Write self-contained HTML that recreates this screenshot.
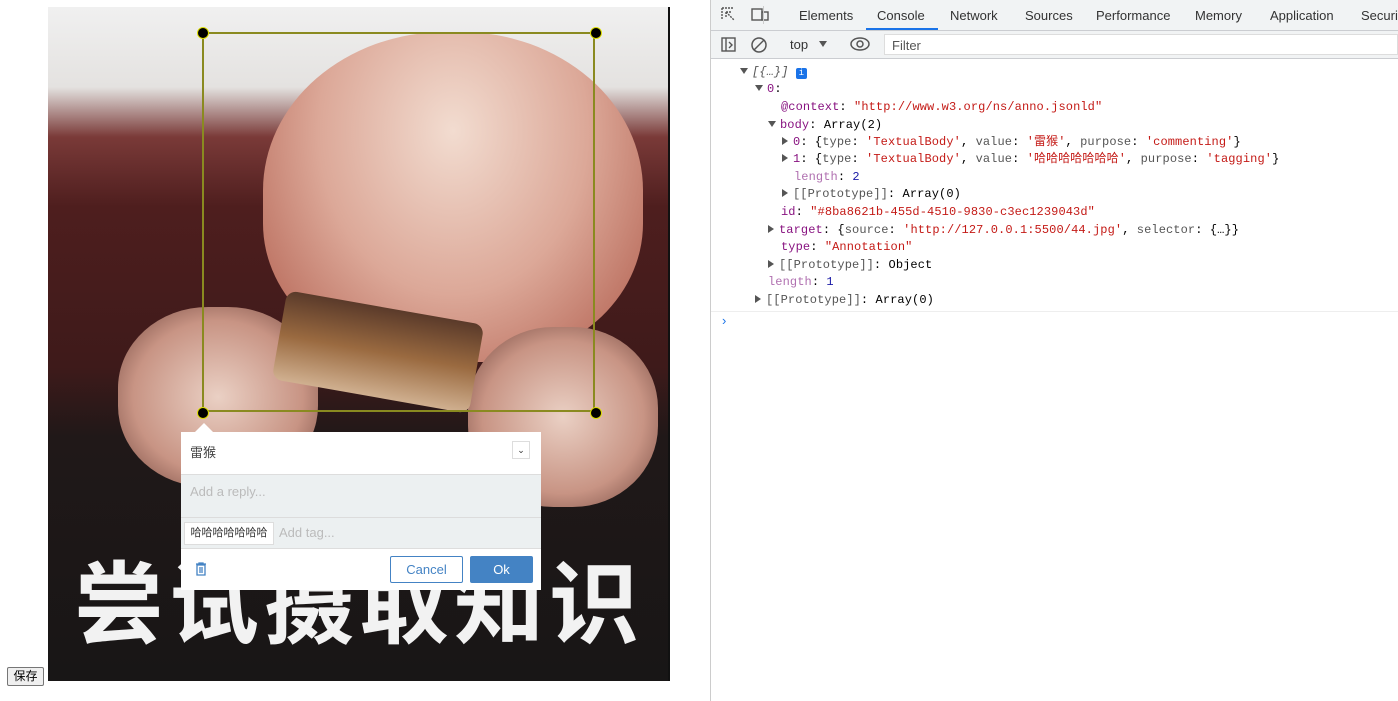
<!DOCTYPE html>
<html><head><meta charset="utf-8"><style>
body{margin:0;width:1398px;height:701px;background:#fff;position:relative;overflow:hidden;font-family:"Liberation Sans","Noto Sans CJK SC",sans-serif}
.abs{position:absolute}
#img{left:48px;top:7px;width:622px;height:674px;overflow:hidden;background:#e8e8e8}
.mono{font-family:"Liberation Mono","Noto Sans CJK SC",monospace;font-size:12px;white-space:pre;letter-spacing:0.1px}
.l{position:absolute;height:17px;line-height:17px}
.k{color:#881280}.s{color:#c41a16}.n{color:#1a1aa6}.g{color:#999}.t{color:#555}
.tri{display:inline-block;width:0;height:0;border-left:4px solid transparent;border-right:4px solid transparent;border-top:6px solid #555;margin-right:4px;vertical-align:1px}
.trr{display:inline-block;width:0;height:0;border-top:4px solid transparent;border-bottom:4px solid transparent;border-left:6px solid #555;margin-right:5px;vertical-align:0}
.tab{position:absolute;top:8px;font-size:13px;color:#333}
.h{position:absolute;width:10px;height:10px;border-radius:50%;background:#000;border:1px solid #dd0}
</style></head><body>
<div id="img" class="abs">
 <div class="abs" style="left:0;top:0;width:622px;height:674px;background:linear-gradient(#f0f0f0 0,#e4e2e0 80px,#7a3a38 130px,#4e1e1e 200px,#3e1a1a 360px,#201818 430px,#181616 674px)"></div>
 <div class="abs" style="left:215px;top:25px;width:380px;height:330px;border-radius:48% 48% 42% 42%;background:radial-gradient(ellipse at 50% 30%,#f2dcd0,#dca898 50%,#c07868 80%,#8a4a40)"></div>
 <div class="abs" style="left:70px;top:300px;width:200px;height:180px;border-radius:45%;background:radial-gradient(#ead0c4,#c89484 60%,#6a4038)"></div>
 <div class="abs" style="left:420px;top:320px;width:190px;height:180px;border-radius:45%;background:radial-gradient(#ead0c4,#c89484 60%,#6a4038)"></div>
 <div class="abs" style="left:230px;top:300px;width:200px;height:90px;transform:rotate(10deg);background:linear-gradient(#5a3a2a,#9a6a40,#d0b090);border-radius:10px"></div>
 <div class="abs" style="left:26px;top:530px;font-size:90px;font-weight:bold;color:#f2f2f2;letter-spacing:5px;white-space:nowrap;font-family:'Noto Sans CJK SC',sans-serif;line-height:120px">尝试摄取知识</div>
 <div class="abs" style="left:620px;top:0;width:2px;height:674px;background:#111"></div>
</div>
<div class="abs" style="left:202px;top:32px;width:393px;height:380px;border:2px solid #8a8a20;box-sizing:border-box"></div>
<div class="h" style="left:197px;top:27px"></div><div class="h" style="left:590px;top:27px"></div>
<div class="h" style="left:197px;top:407px"></div><div class="h" style="left:590px;top:407px"></div>
<div class="abs" style="left:195px;top:423px;width:0;height:0;border-left:9px solid transparent;border-right:9px solid transparent;border-bottom:9px solid #fff"></div>
<div class="abs" style="left:181px;top:432px;width:360px;height:158px;background:#fff">
 <div class="abs" style="left:9px;top:10px;font-size:13px;color:#444">雷猴</div>
 <div class="abs" style="left:331px;top:9px;width:18px;height:18px;border:1px solid #ddd;box-sizing:border-box;font-size:9px;text-align:center;line-height:16px;color:#333">⌄</div>
 <div class="abs" style="left:0;top:42px;width:360px;height:74px;background:#ecf0f1;border-top:1px solid #ddd"></div>
 <div class="abs" style="left:0;top:85px;width:360px;height:1px;background:#dcdcdc"></div>
 <div class="abs" style="left:9px;top:52px;font-size:13px;color:#bbb">Add a reply...</div>
 <div class="abs" style="left:3px;top:90px;width:90px;height:23px;background:#fff;border:1px solid #ddd;box-sizing:border-box;font-size:11px;line-height:21px;text-align:center;color:#333">哈哈哈哈哈哈哈</div>
 <div class="abs" style="left:98px;top:93px;font-size:13px;color:#bbb">Add tag...</div>
 <div class="abs" style="left:0;top:116px;width:360px;height:1px;background:#ddd"></div>
 <svg class="abs" style="left:14px;top:130px" width="12" height="14" viewBox="0 0 12 14"><path d="M1 2h10M4 2V1h4v1M2 3h8v10H2zM5 5v6M7 5v6" fill="none" stroke="#4483c4" stroke-width="1.3"/></svg>
 <div class="abs" style="left:209px;top:124px;width:73px;height:27px;border:1px solid #4483c4;box-sizing:border-box;color:#4483c4;font-size:13px;text-align:center;line-height:25px;border-radius:2px">Cancel</div>
 <div class="abs" style="left:289px;top:124px;width:63px;height:27px;background:#4483c4;color:#fff;font-size:13px;text-align:center;line-height:27px;border-radius:2px">Ok</div>
</div>
<div class="abs" style="left:7px;top:667px;width:37px;height:19px;border:1px solid #767676;background:#efefef;box-sizing:border-box;font-size:12px;text-align:center;line-height:17px;border-radius:2px">保存</div>

<div class="abs" style="left:710px;top:0;width:1px;height:701px;background:#ccc"></div>
<div class="abs" style="left:711px;top:0;width:687px;height:30px;background:#f1f3f4;border-bottom:1px solid #cbcdd1"></div>
<svg class="abs" style="left:720px;top:6px" width="18" height="18"><path d="M2 2h12M2 2v12M6 6l8 8M6 6h5M6 6v5" fill="none" stroke="#555" stroke-width="1.4" stroke-dasharray="2 1"/></svg>
<svg class="abs" style="left:750px;top:6px" width="20" height="18"><rect x="2" y="3" width="10" height="11" fill="none" stroke="#555" stroke-width="1.4"/><rect x="12" y="6" width="6" height="8" fill="none" stroke="#555" stroke-width="1.4"/></svg>
<div class="abs" style="left:763px;top:6px;width:1px;height:18px;background:#ccc"></div>
<div class="tab" style="left:799px">Elements</div>
<div class="tab" style="left:877px">Console</div>
<div class="abs" style="left:866px;top:28px;width:72px;height:2px;background:#1a73e8"></div>
<div class="tab" style="left:950px">Network</div>
<div class="tab" style="left:1025px">Sources</div>
<div class="tab" style="left:1096px">Performance</div>
<div class="tab" style="left:1195px">Memory</div>
<div class="tab" style="left:1270px">Application</div>
<div class="tab" style="left:1361px">Securi</div>
<div class="abs" style="left:711px;top:31px;width:687px;height:27px;background:#f1f3f4;border-bottom:1px solid #cbcdd1"></div>
<svg class="abs" style="left:720px;top:36px" width="18" height="18"><rect x="2" y="2" width="13" height="13" fill="none" stroke="#555" stroke-width="1.4"/><path d="M6 2v13M9 6l3 3-3 3" fill="none" stroke="#555" stroke-width="1.4"/></svg>
<svg class="abs" style="left:750px;top:36px" width="18" height="18"><circle cx="9" cy="9" r="7" fill="none" stroke="#555" stroke-width="1.5"/><path d="M4 14L14 4" stroke="#555" stroke-width="1.5"/></svg>
<div class="abs" style="left:790px;top:37px;font-size:13px;color:#333">top</div>
<div class="abs" style="left:819px;top:41px;border-left:4px solid transparent;border-right:4px solid transparent;border-top:6px solid #555"></div>
<svg class="abs" style="left:849px;top:36px" width="22" height="16"><ellipse cx="11" cy="8" rx="9" ry="6" fill="none" stroke="#555" stroke-width="1.5"/><circle cx="11" cy="8" r="3" fill="none" stroke="#555" stroke-width="1.5"/></svg>
<div class="abs" style="left:884px;top:34px;width:514px;height:21px;background:#fff;border:1px solid #ddd;box-sizing:border-box"></div>
<div class="abs" style="left:892px;top:38px;font-size:13px;color:#555">Filter</div>

<div class="mono">
<div class="l" style="left:740px;top:64px"><span class="tri"></span><i class="t">[{…}]</i> <span style="display:inline-block;width:11px;height:11px;background:#1a73e8;color:#fff;font-size:9px;line-height:11px;text-align:center;border-radius:2px">i</span></div>
<div class="l" style="left:755px;top:81px"><span class="tri"></span><span class="k">0</span>:</div>
<div class="l" style="left:781px;top:99px"><span class="k">@context</span>: <span class="s">"http://www.w3.org/ns/anno.jsonld"</span></div>
<div class="l" style="left:768px;top:117px"><span class="tri"></span><span class="k">body</span>: Array(2)</div>
<div class="l" style="left:782px;top:134px"><span class="trr"></span><span class="k">0</span>: {<span class="t">type</span>: <span class="s">'TextualBody'</span>, <span class="t">value</span>: <span class="s">'雷猴'</span>, <span class="t">purpose</span>: <span class="s">'commenting'</span>}</div>
<div class="l" style="left:782px;top:151px"><span class="trr"></span><span class="k">1</span>: {<span class="t">type</span>: <span class="s">'TextualBody'</span>, <span class="t">value</span>: <span class="s">'哈哈哈哈哈哈哈'</span>, <span class="t">purpose</span>: <span class="s">'tagging'</span>}</div>
<div class="l" style="left:794px;top:169px"><span style="color:#b070b0">length</span>: <span class="n">2</span></div>
<div class="l" style="left:782px;top:186px"><span class="trr"></span><span class="t">[[Prototype]]</span>: Array(0)</div>
<div class="l" style="left:781px;top:204px"><span class="k">id</span>: <span class="s">"#8ba8621b-455d-4510-9830-c3ec1239043d"</span></div>
<div class="l" style="left:768px;top:222px"><span class="trr"></span><span class="k">target</span>: {<span class="t">source</span>: <span class="s">'http://127.0.0.1:5500/44.jpg'</span>, <span class="t">selector</span>: {…}}</div>
<div class="l" style="left:781px;top:239px"><span class="k">type</span>: <span class="s">"Annotation"</span></div>
<div class="l" style="left:768px;top:257px"><span class="trr"></span><span class="t">[[Prototype]]</span>: Object</div>
<div class="l" style="left:768px;top:274px"><span style="color:#b070b0">length</span>: <span class="n">1</span></div>
<div class="l" style="left:755px;top:292px"><span class="trr"></span><span class="t">[[Prototype]]</span>: Array(0)</div>
</div>
<div class="abs" style="left:711px;top:311px;width:687px;height:1px;background:#eee"></div>
<div class="abs" style="left:722px;top:313px;font-size:13px;color:#1a73e8">›</div>
</body></html>
